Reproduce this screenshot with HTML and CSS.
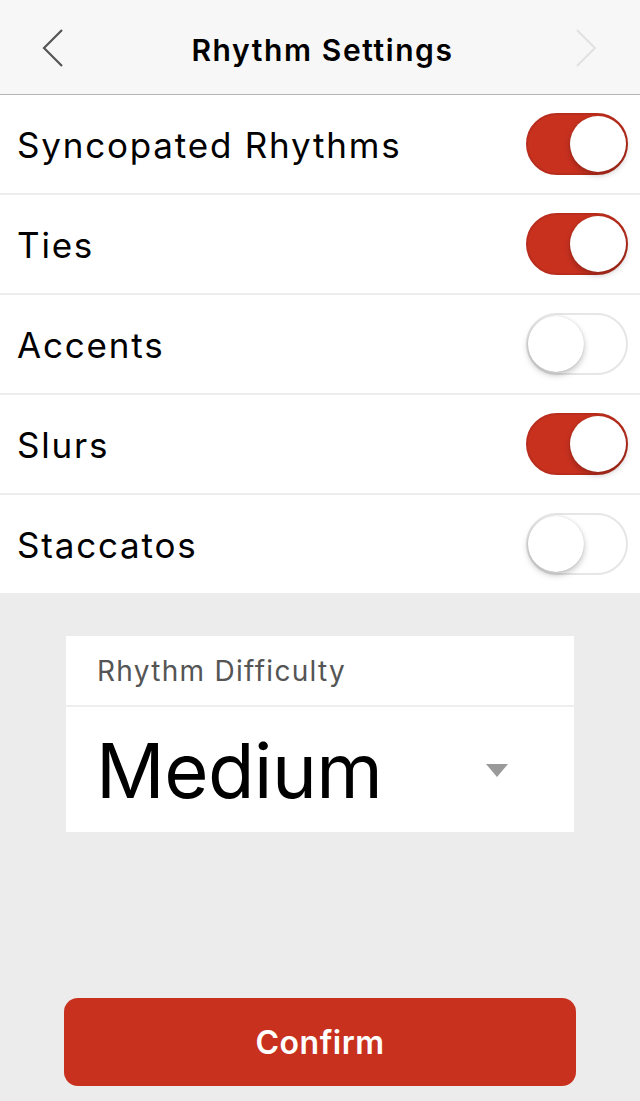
FILE: index.html
```html
<!DOCTYPE html>
<html lang="en">
<head>
  <meta charset="UTF-8" />
  <meta name="viewport" content="width=device-width, initial-scale=1" />
  <title>Rhythm Settings</title>
  <link rel="stylesheet" href="styles.css">
</head>
<body>

  <!-- Nav bar -->
  <div class="navbar">
    <svg class="nav-arrow" width="24" height="40" viewBox="0 0 24 40">
      <path d="M21 2 L3 20 L21 38" fill="none" stroke="#555" stroke-width="2.2" />
    </svg>
    <span class="nav-title">Rhythm Settings</span>
    <svg class="nav-arrow" width="24" height="40" viewBox="0 0 24 40">
      <path d="M3 2 L21 20 L3 38" fill="none" stroke="#e2e2e2" stroke-width="2.2" />
    </svg>
  </div>

  <!-- Toggles -->
  <ul class="settings">
    <li><span>Syncopated Rhythms</span><div class="switch on"><div class="knob"></div></div></li>
    <li><span>Ties</span><div class="switch on"><div class="knob"></div></div></li>
    <li><span>Accents</span><div class="switch"><div class="knob"></div></div></li>
    <li><span>Slurs</span><div class="switch on"><div class="knob"></div></div></li>
    <li><span>Staccatos</span><div class="switch"><div class="knob"></div></div></li>
  </ul>

  <div class="lower">
    <div class="picker">
      <div class="picker-label">Rhythm Difficulty</div>
      <div class="picker-value">
        <span>Medium</span>
        <span class="caret"></span>
      </div>
    </div>

    <button class="confirm">Confirm</button>
  </div>

</body>
</html>
```

FILE: styles.css
```css
body {
  margin: 0;
  font-family: "Inter", "Roboto", sans-serif;
  background: #ececec;
  height: 1101px;
  display: flex;
  flex-direction: column;
}

/* Nav bar */
.navbar {
  height: 94px;
  background: #f7f7f7;
  border-bottom: 1px solid #b4b4b4;
  display: flex;
  align-items: center;
  justify-content: space-between;
  padding: 0 42px 0 41px;
}
.nav-arrow {
  display: block;
  margin-top: 1px;
}
.nav-title {
  font-size: 30px;
  font-weight: 600;
  letter-spacing: 1.6px;
  color: #000;
  margin: 5px 0 0 6px;
}

/* Settings list */
.settings {
  list-style: none;
  margin: 0;
  padding: 0;
  background: #fff;
}
.settings li {
  height: 98px;
  display: flex;
  align-items: center;
  justify-content: space-between;
  padding: 0 12px 0 17px;
  font-size: 35px;
  letter-spacing: 1.8px;
  color: #000;
}
.settings li + li {
  border-top: 2px solid #ededed;
}
.settings li span {
  margin-top: 2px;
}

/* Switch */
.switch {
  width: 102px;
  height: 62px;
  box-sizing: border-box;
  border-radius: 31px;
  border: 2px solid #e6e6e6;
  background: #fff;
  position: relative;
}
.switch .knob {
  position: absolute;
  top: 1px;
  left: 0;
  width: 56px;
  height: 56px;
  border-radius: 50%;
  background: #fff;
  box-shadow: 0 3px 6px rgba(0,0,0,0.25), 0 0 1px rgba(0,0,0,0.2);
}
.switch.on {
  background: #c9311f;
  border-color: #b82d1d;
}
.switch.on .knob {
  left: auto;
  right: 0;
}

/* Lower area */
.lower {
  flex: 1;
  display: flex;
  flex-direction: column;
  align-items: center;
  padding-top: 43px;
}

.picker {
  width: 508px;
  background: #fff;
}
.picker-label {
  height: 69px;
  display: flex;
  align-items: center;
  padding-left: 31px;
  font-size: 28px;
  letter-spacing: 1.3px;
  color: #555;
  border-bottom: 2px solid #eeeeee;
}
.picker-value {
  height: 125px;
  display: flex;
  align-items: center;
  justify-content: space-between;
  padding: 0 66px 0 30px;
  font-size: 76px;
  letter-spacing: -0.5px;
  color: #000;
}
.caret {
  width: 0;
  height: 0;
  border-left: 11px solid transparent;
  border-right: 11px solid transparent;
  border-top: 13px solid #9a9a9a;
  margin-top: 2px;
}

.confirm {
  margin-top: auto;
  margin-bottom: 15px;
  width: 512px;
  height: 88px;
  border: none;
  border-radius: 14px;
  background: #c9311f;
  color: #fff;
  font-family: "Inter", "Roboto", sans-serif;
  font-size: 32px;
  font-weight: 600;
  letter-spacing: 0.5px;
}
```
